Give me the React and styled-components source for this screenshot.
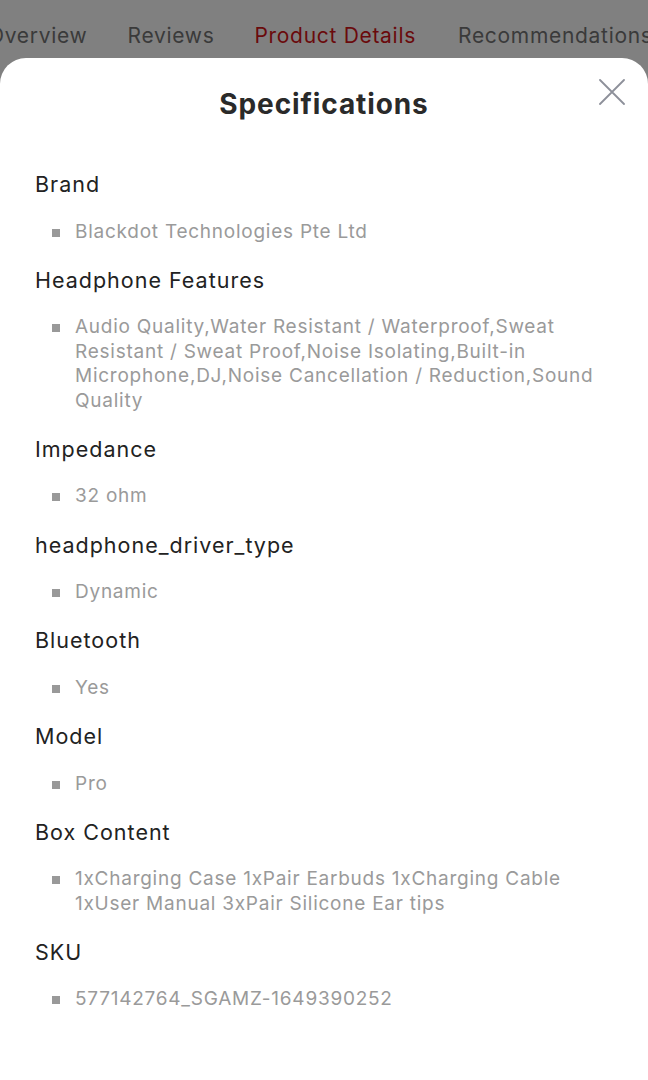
import React from "react";
import styled, { createGlobalStyle } from "styled-components";

const Global = createGlobalStyle`
  html, body { margin: 0; padding: 0; background: #808080; }
  body { font-family: Inter, "Noto Sans", Roboto, sans-serif; -webkit-font-smoothing: antialiased; }
  * { box-sizing: border-box; }
`;

const Page = styled.div`
  width: 648px;
  height: 1080px;
  overflow: hidden;
  display: flex;
  flex-direction: column;
  background: #808080;
`;

const Tabs = styled.div`
  height: 58px;
  display: flex;
  align-items: flex-start;
  padding-top: 22px;
  margin-left: -12px;
  white-space: nowrap;
`;

const Tab = styled.div`
  font-size: 21px;
  line-height: 28px;
  color: ${(p) => (p.$active ? "#6a0a0c" : "#3a3a3a")};
  margin-right: ${(p) => p.$gap}px;
  letter-spacing: 0.7px;
`;

const Sheet = styled.div`
  flex: 1;
  background: #fff;
  border-radius: 26px 26px 0 0;
  padding: 27px 35px 0 35px;
  position: relative;
`;

const Title = styled.h1`
  margin: 0;
  text-align: center;
  font-size: 28px;
  line-height: 38px;
  font-weight: 700;
  color: #2a2a2a;
  letter-spacing: 0.9px;
`;

const Close = styled.button`
  position: absolute;
  top: 20px;
  right: 22px;
  width: 28px;
  height: 28px;
  padding: 0;
  border: 0;
  background: transparent;
  display: flex;
  align-items: center;
  justify-content: center;
`;

const List = styled.div`
  display: flex;
  flex-direction: column;
  gap: 21.6px;
  margin-top: 47px;
`;

const Label = styled.div`
  font-size: 21.5px;
  line-height: 28px;
  color: #222;
  letter-spacing: 1px;
`;

const Value = styled.div`
  display: flex;
  align-items: flex-start;
  padding-left: 17px;
  padding-right: 18px;
  font-size: 19px;
  line-height: 24.5px;
  color: #9a9a9a;
  letter-spacing: 0.75px;
`;

const Bullet = styled.span`
  flex: none;
  width: 8px;
  height: 8px;
  background: #999;
  margin-top: 9px;
  margin-right: 15px;
`;

const specs = [
  ["Brand", "Blackdot Technologies Pte Ltd"],
  [
    "Headphone Features",
    "Audio Quality,Water Resistant / Waterproof,Sweat Resistant / Sweat Proof,Noise Isolating,Built-in Microphone,DJ,Noise Cancellation / Reduction,Sound Quality",
  ],
  ["Impedance", "32 ohm"],
  ["headphone_driver_type", "Dynamic"],
  ["Bluetooth", "Yes"],
  ["Model", "Pro"],
  ["Box Content", "1xCharging Case 1xPair Earbuds 1xCharging Cable 1xUser Manual 3xPair Silicone Ear tips"],
  ["SKU", "577142764_SGAMZ-1649390252"],
];

export default function App() {
  return (
    <Page>
      <Global />
      <Tabs>
        <Tab $gap={40}>Overview</Tab>
        <Tab $gap={40}>Reviews</Tab>
        <Tab $active $gap={42}>Product Details</Tab>
        <Tab $gap={0}>Recommendations</Tab>
      </Tabs>
      <Sheet>
        <Title>Specifications</Title>
        <Close aria-label="Close">
          <svg width="26" height="26" viewBox="0 0 26 26">
            <path d="M1 1 L25 25 M25 1 L1 25" stroke="#8d909a" strokeWidth="1.8" strokeLinecap="round" />
          </svg>
        </Close>
        <List>
          {specs.map(([k, v]) => (
            <React.Fragment key={k}>
              <Label>{k}</Label>
              <Value>
                <Bullet />
                <span>{v}</span>
              </Value>
            </React.Fragment>
          ))}
        </List>
      </Sheet>
    </Page>
  );
}
